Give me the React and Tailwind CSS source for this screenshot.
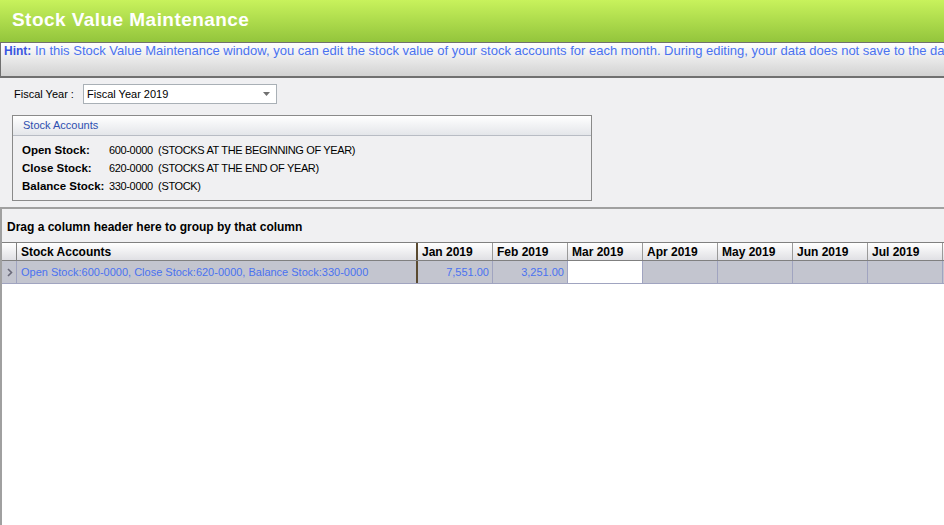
const months = ["Jan 2019", "Feb 2019", "Mar 2019", "Apr 2019", "May 2019", "Jun 2019", "Jul 2019"];
const values = ["7,551.00", "3,251.00", "", "", "", "", ""];

function App() {
  return (
    <div
      className="w-[944px] h-[525px] overflow-hidden bg-[#f0f0f2] flex flex-col text-[12px] text-black"
      style={{ fontFamily: "'Liberation Sans', Arial, sans-serif" }}
    >
      {/* title */}
      <div className="h-[42px] shrink-0 bg-gradient-to-b from-[#c8f25c] to-[#93c53c] flex items-center pl-[12px]">
        <span className="text-white font-bold text-[19px] tracking-[0.45px] -mt-[1px]">Stock Value Maintenance</span>
      </div>

      {/* hint */}
      <div className="h-[36px] shrink-0 bg-gradient-to-b from-white to-[#d2d2d2] border-t border-l border-b-2 border-[#707070] pl-[3px] pt-[1px] text-[13px] leading-[14px] whitespace-nowrap overflow-hidden">
        <span className="text-[#3a56e0] font-bold text-[12px]">Hint:</span>
        <span className="text-[#4a72f0]"> In this Stock Value Maintenance window, you can edit the stock value of your stock accounts for each month. During editing, your data does not save to the database until you click Save.</span>
      </div>

      {/* fiscal year */}
      <div className="flex items-center mt-[6px] pl-[14px] h-[20px] text-[11px]">
        <span className="w-[69px]">Fiscal Year :</span>
        <div className="w-[194px] h-[20px] bg-white border border-[#a9b0b6] flex items-center justify-between pl-[3px] pr-[5px]">
          <span>Fiscal Year 2019</span>
          <svg width="8" height="4" viewBox="0 0 8 4"><path d="M0 0h7L3.5 4z" fill="#707070" /></svg>
        </div>
      </div>

      {/* stock accounts group */}
      <div className="ml-[12px] mt-[11px] w-[580px] h-[86px] border border-[#8a8a8a] bg-[#f0f0f2]">
        <div className="h-[20px] bg-gradient-to-b from-white to-[#e4e6ea] border-b border-[#b8bcc4] pl-[10px] flex items-center text-[#2d4fb0] text-[11px]">
          Stock Accounts
        </div>
        <div className="pl-[9px] pt-[7px] flex flex-col gap-[3px] leading-[15px] text-[11px] tracking-[-0.35px]">
          <div className="flex"><span className="w-[87px] font-bold text-[11.5px] tracking-normal">Open Stock:</span><span>600-0000&nbsp;&nbsp;(STOCKS AT THE BEGINNING OF YEAR)</span></div>
          <div className="flex"><span className="w-[87px] font-bold text-[11.5px] tracking-normal">Close Stock:</span><span>620-0000&nbsp;&nbsp;(STOCKS AT THE END OF YEAR)</span></div>
          <div className="flex"><span className="w-[87px] font-bold text-[11.5px] tracking-normal">Balance Stock:</span><span>330-0000&nbsp;&nbsp;(STOCK)</span></div>
        </div>
      </div>

      {/* grid panel */}
      <div className="mt-[6px] flex-1 border-t-2 border-l-2 border-[#a0a0a0] flex flex-col">
        <div className="h-[33px] shrink-0 bg-[#f0f0f2] flex items-center pl-[5px] pt-[3px] font-bold">
          Drag a column header here to group by that column
        </div>
        <div className="flex-1 bg-white">
          <div className="flex h-[19px] bg-gradient-to-b from-white to-[#e0e0e4] border-t border-b border-[#808080] font-bold">
            <div className="w-[14px] border-r border-[#808080] ml-[1px]" />
            <div className="w-[401px] border-r-2 border-[#5a4a30] pl-[4px] flex items-center">Stock Accounts</div>
            {months.map((m) => (
              <div key={m} className="w-[75px] shrink-0 border-r border-[#9a9a9a] pl-[4px] flex items-center">{m}</div>
            ))}
          </div>
          <div className="flex h-[23px] bg-[#c3c5cf] border-b border-[#a0a4c0] text-[#4a72f0] text-[11px]">
            <div className="w-[14px] ml-[1px] border-r border-[#a0a4c0] flex items-center justify-center">
              <svg width="6" height="9" viewBox="0 0 6 9"><path d="M1 1l3.5 3.5L1 8" stroke="#6a6a7a" strokeWidth="1.6" fill="none" /></svg>
            </div>
            <div className="w-[401px] border-r-2 border-[#5a4a30] pl-[4px] flex items-center">
              Open Stock:600-0000, Close Stock:620-0000, Balance Stock:330-0000
            </div>
            {values.map((v, i) => (
              <div
                key={i}
                className={`w-[75px] shrink-0 border-r border-[#a0a4c0] pr-[3px] flex items-center justify-end ${i === 2 ? "bg-white" : ""}`}
              >
                {v}
              </div>
            ))}
          </div>
        </div>
      </div>
    </div>
  );
}

export default App;
